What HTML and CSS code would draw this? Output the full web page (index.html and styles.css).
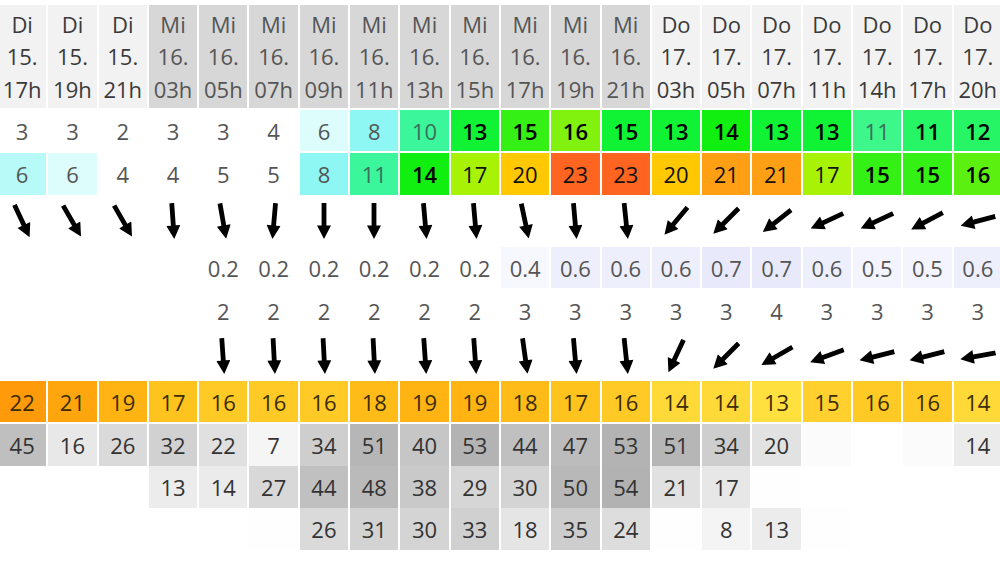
FILE: index.html
```html
<!DOCTYPE html>
<html lang="de">

<head>
  <meta charset="UTF-8">
  <meta name="viewport" content="width=device-width, initial-scale=1.0">
  <title>Vorhersage</title>
  <link rel="stylesheet" href="styles.css">
</head>

<body>
  <svg class="defs" width="0" height="0">
    <symbol id="arrow" viewBox="0 0 14 36">
      <path d="M4.6 0 H9.4 V22.5 H14 L7 36 L0 22.5 H4.6 Z" />
    </symbol>
  </svg>

  <div class="forecast">
    <!-- Zeit -->
    <div class="row head">
      <div class="cell">Di<br>15.<br>17h</div>
      <div class="cell">Di<br>15.<br>19h</div>
      <div class="cell">Di<br>15.<br>21h</div>
      <div class="cell today">Mi<br>16.<br>03h</div>
      <div class="cell today">Mi<br>16.<br>05h</div>
      <div class="cell today">Mi<br>16.<br>07h</div>
      <div class="cell today">Mi<br>16.<br>09h</div>
      <div class="cell today">Mi<br>16.<br>11h</div>
      <div class="cell today">Mi<br>16.<br>13h</div>
      <div class="cell today">Mi<br>16.<br>15h</div>
      <div class="cell today">Mi<br>16.<br>17h</div>
      <div class="cell today">Mi<br>16.<br>19h</div>
      <div class="cell today">Mi<br>16.<br>21h</div>
      <div class="cell">Do<br>17.<br>03h</div>
      <div class="cell">Do<br>17.<br>05h</div>
      <div class="cell">Do<br>17.<br>07h</div>
      <div class="cell">Do<br>17.<br>11h</div>
      <div class="cell">Do<br>17.<br>14h</div>
      <div class="cell">Do<br>17.<br>17h</div>
      <div class="cell">Do<br>17.<br>20h</div>
    </div>

    <!-- Wind -->
    <div class="row">
      <div class="cell">3</div>
      <div class="cell">3</div>
      <div class="cell">2</div>
      <div class="cell">3</div>
      <div class="cell">3</div>
      <div class="cell">4</div>
      <div class="cell cy1">6</div>
      <div class="cell cy3">8</div>
      <div class="cell tq tl">10</div>
      <div class="cell gr2 b">13</div>
      <div class="cell gr4 b">15</div>
      <div class="cell lm2 b">16</div>
      <div class="cell gr2 b">15</div>
      <div class="cell gr2 b">13</div>
      <div class="cell gr3 b">14</div>
      <div class="cell gr2 b">13</div>
      <div class="cell gr2 b">13</div>
      <div class="cell tq2 tl">11</div>
      <div class="cell gr1 b">11</div>
      <div class="cell gr1 b">12</div>
    </div>

    <!-- Boeen -->
    <div class="row">
      <div class="cell cy2">6</div>
      <div class="cell cy1">6</div>
      <div class="cell">4</div>
      <div class="cell">4</div>
      <div class="cell">5</div>
      <div class="cell">5</div>
      <div class="cell cy3">8</div>
      <div class="cell tq tl">11</div>
      <div class="cell gr3 b">14</div>
      <div class="cell yg dk">17</div>
      <div class="cell am dk">20</div>
      <div class="cell rd dk">23</div>
      <div class="cell rd dk">23</div>
      <div class="cell am dk">20</div>
      <div class="cell or dk">21</div>
      <div class="cell or dk">21</div>
      <div class="cell yg dk">17</div>
      <div class="cell gr4 b">15</div>
      <div class="cell gr4 b">15</div>
      <div class="cell lm1 b">16</div>
    </div>

    <!-- Windrichtung -->
    <div class="row arrows">
      <div class="cell"><svg class="arr" style="--d:-25deg"><use href="#arrow" /></svg></div>
      <div class="cell"><svg class="arr" style="--d:-30deg"><use href="#arrow" /></svg></div>
      <div class="cell"><svg class="arr" style="--d:-30deg"><use href="#arrow" /></svg></div>
      <div class="cell"><svg class="arr" style="--d:-4deg"><use href="#arrow" /></svg></div>
      <div class="cell"><svg class="arr" style="--d:-10deg"><use href="#arrow" /></svg></div>
      <div class="cell"><svg class="arr" style="--d:5deg"><use href="#arrow" /></svg></div>
      <div class="cell"><svg class="arr" style="--d:0deg"><use href="#arrow" /></svg></div>
      <div class="cell"><svg class="arr" style="--d:0deg"><use href="#arrow" /></svg></div>
      <div class="cell"><svg class="arr" style="--d:-5deg"><use href="#arrow" /></svg></div>
      <div class="cell"><svg class="arr" style="--d:-5deg"><use href="#arrow" /></svg></div>
      <div class="cell"><svg class="arr" style="--d:-12deg"><use href="#arrow" /></svg></div>
      <div class="cell"><svg class="arr" style="--d:-5deg"><use href="#arrow" /></svg></div>
      <div class="cell"><svg class="arr" style="--d:-6deg"><use href="#arrow" /></svg></div>
      <div class="cell"><svg class="arr" style="--d:40deg"><use href="#arrow" /></svg></div>
      <div class="cell"><svg class="arr" style="--d:45deg"><use href="#arrow" /></svg></div>
      <div class="cell"><svg class="arr" style="--d:52deg"><use href="#arrow" /></svg></div>
      <div class="cell"><svg class="arr" style="--d:65deg"><use href="#arrow" /></svg></div>
      <div class="cell"><svg class="arr" style="--d:65deg"><use href="#arrow" /></svg></div>
      <div class="cell"><svg class="arr" style="--d:62deg"><use href="#arrow" /></svg></div>
      <div class="cell"><svg class="arr" style="--d:75deg"><use href="#arrow" /></svg></div>
    </div>

    <!-- Wellenhoehe -->
    <div class="row">
      <div class="cell"></div>
      <div class="cell"></div>
      <div class="cell"></div>
      <div class="cell"></div>
      <div class="cell">0.2</div>
      <div class="cell">0.2</div>
      <div class="cell">0.2</div>
      <div class="cell">0.2</div>
      <div class="cell">0.2</div>
      <div class="cell">0.2</div>
      <div class="cell wv4">0.4</div>
      <div class="cell wv6">0.6</div>
      <div class="cell wv6">0.6</div>
      <div class="cell wv6">0.6</div>
      <div class="cell wv7">0.7</div>
      <div class="cell wv7">0.7</div>
      <div class="cell wv6">0.6</div>
      <div class="cell wv5">0.5</div>
      <div class="cell wv5">0.5</div>
      <div class="cell wv6">0.6</div>
    </div>

    <!-- Wellenperiode -->
    <div class="row">
      <div class="cell"></div>
      <div class="cell"></div>
      <div class="cell"></div>
      <div class="cell"></div>
      <div class="cell">2</div>
      <div class="cell">2</div>
      <div class="cell">2</div>
      <div class="cell">2</div>
      <div class="cell">2</div>
      <div class="cell">2</div>
      <div class="cell">3</div>
      <div class="cell">3</div>
      <div class="cell">3</div>
      <div class="cell">3</div>
      <div class="cell">3</div>
      <div class="cell">4</div>
      <div class="cell">3</div>
      <div class="cell">3</div>
      <div class="cell">3</div>
      <div class="cell">3</div>
    </div>

    <!-- Wellenrichtung -->
    <div class="row arrows waves">
      <div class="cell"></div>
      <div class="cell"></div>
      <div class="cell"></div>
      <div class="cell"></div>
      <div class="cell"><svg class="arr" style="--d:-4deg"><use href="#arrow" /></svg></div>
      <div class="cell"><svg class="arr" style="--d:-3deg"><use href="#arrow" /></svg></div>
      <div class="cell"><svg class="arr" style="--d:-3deg"><use href="#arrow" /></svg></div>
      <div class="cell"><svg class="arr" style="--d:-3deg"><use href="#arrow" /></svg></div>
      <div class="cell"><svg class="arr" style="--d:-4deg"><use href="#arrow" /></svg></div>
      <div class="cell"><svg class="arr" style="--d:-4deg"><use href="#arrow" /></svg></div>
      <div class="cell"><svg class="arr" style="--d:-8deg"><use href="#arrow" /></svg></div>
      <div class="cell"><svg class="arr" style="--d:-5deg"><use href="#arrow" /></svg></div>
      <div class="cell"><svg class="arr" style="--d:-6deg"><use href="#arrow" /></svg></div>
      <div class="cell"><svg class="arr" style="--d:25deg"><use href="#arrow" /></svg></div>
      <div class="cell"><svg class="arr" style="--d:45deg"><use href="#arrow" /></svg></div>
      <div class="cell"><svg class="arr" style="--d:60deg"><use href="#arrow" /></svg></div>
      <div class="cell"><svg class="arr" style="--d:70deg"><use href="#arrow" /></svg></div>
      <div class="cell"><svg class="arr" style="--d:76deg"><use href="#arrow" /></svg></div>
      <div class="cell"><svg class="arr" style="--d:76deg"><use href="#arrow" /></svg></div>
      <div class="cell"><svg class="arr" style="--d:80deg"><use href="#arrow" /></svg></div>
    </div>

    <!-- Temperatur -->
    <div class="row temp">
      <div class="cell t22">22</div>
      <div class="cell t21">21</div>
      <div class="cell t19">19</div>
      <div class="cell t17">17</div>
      <div class="cell t16">16</div>
      <div class="cell t16">16</div>
      <div class="cell t16">16</div>
      <div class="cell t18">18</div>
      <div class="cell t19">19</div>
      <div class="cell t19">19</div>
      <div class="cell t18">18</div>
      <div class="cell t17">17</div>
      <div class="cell t16">16</div>
      <div class="cell t14">14</div>
      <div class="cell t14">14</div>
      <div class="cell t13">13</div>
      <div class="cell t15">15</div>
      <div class="cell t16">16</div>
      <div class="cell t16">16</div>
      <div class="cell t14">14</div>
    </div>

    <!-- Bewoelkung -->
    <div class="clouds">
      <div class="row">
        <div class="cell cl" style="--v:45">45</div>
        <div class="cell cl" style="--v:16">16</div>
        <div class="cell cl" style="--v:26">26</div>
        <div class="cell cl" style="--v:32">32</div>
        <div class="cell cl" style="--v:22">22</div>
        <div class="cell cl" style="--v:7">7</div>
        <div class="cell cl" style="--v:34">34</div>
        <div class="cell cl" style="--v:51">51</div>
        <div class="cell cl" style="--v:40">40</div>
        <div class="cell cl" style="--v:53">53</div>
        <div class="cell cl" style="--v:44">44</div>
        <div class="cell cl" style="--v:47">47</div>
        <div class="cell cl" style="--v:53">53</div>
        <div class="cell cl" style="--v:51">51</div>
        <div class="cell cl" style="--v:34">34</div>
        <div class="cell cl" style="--v:20">20</div>
        <div class="cell cl" style="--v:3"></div>
        <div class="cell"></div>
        <div class="cell cl" style="--v:3"></div>
        <div class="cell cl" style="--v:14">14</div>
      </div>
      <div class="row">
        <div class="cell"></div>
        <div class="cell"></div>
        <div class="cell"></div>
        <div class="cell cl" style="--v:13">13</div>
        <div class="cell cl" style="--v:14">14</div>
        <div class="cell cl" style="--v:27">27</div>
        <div class="cell cl" style="--v:44">44</div>
        <div class="cell cl" style="--v:48">48</div>
        <div class="cell cl" style="--v:38">38</div>
        <div class="cell cl" style="--v:29">29</div>
        <div class="cell cl" style="--v:30">30</div>
        <div class="cell cl" style="--v:50">50</div>
        <div class="cell cl" style="--v:54">54</div>
        <div class="cell cl" style="--v:21">21</div>
        <div class="cell cl" style="--v:17">17</div>
        <div class="cell cl" style="--v:1"></div>
        <div class="cell"></div>
        <div class="cell"></div>
        <div class="cell"></div>
        <div class="cell"></div>
      </div>
      <div class="row">
        <div class="cell"></div>
        <div class="cell"></div>
        <div class="cell"></div>
        <div class="cell"></div>
        <div class="cell"></div>
        <div class="cell cl" style="--v:1"></div>
        <div class="cell cl" style="--v:26">26</div>
        <div class="cell cl" style="--v:31">31</div>
        <div class="cell cl" style="--v:30">30</div>
        <div class="cell cl" style="--v:33">33</div>
        <div class="cell cl" style="--v:18">18</div>
        <div class="cell cl" style="--v:35">35</div>
        <div class="cell cl" style="--v:24">24</div>
        <div class="cell cl" style="--v:1"></div>
        <div class="cell cl" style="--v:8">8</div>
        <div class="cell cl" style="--v:13">13</div>
        <div class="cell cl" style="--v:1"></div>
        <div class="cell"></div>
        <div class="cell"></div>
        <div class="cell"></div>
      </div>
    </div>
  </div>
</body>

</html>
```

FILE: styles.css
```css
body {
  margin: 0;
  padding: 0;
  background: #fff;
  font-family: "Open Sans", "Liberation Sans", sans-serif;
  font-size: 22px;
  color: #555;
  overflow: hidden;
}

.defs {
  position: absolute;
}

.forecast {
  display: flex;
  flex-direction: column;
  gap: 2px;
  margin-left: -2px;
  padding-top: 5px;
}

.row {
  display: grid;
  grid-template-columns: repeat(20, 48.3px);
  column-gap: 2px;
  height: 41.3px;
}

.cell {
  display: flex;
  align-items: center;
  justify-content: center;
  text-align: center;
  line-height: 1;
}

/* Kopfzeile */
.head {
  height: 103px;
}

.head .cell {
  background: #f2f2f2;
  color: #3a3a3a;
  line-height: 32.5px;
}

.head .cell.today {
  background: #d7d7d7;
  color: #555;
}

/* Pfeile */
.arrows {
  height: 48.4px;
}

.arrows.waves {
  height: 45.4px;
}

.arr {
  width: 14px;
  height: 36px;
  fill: #000;
  transform: rotate(var(--d));
}

/* Textfarben */
.b {
  color: #000;
  font-weight: 600;
}

.dk {
  color: #111;
}

.tl {
  color: #3b6f5c;
}

/* Wind */
.cy1 { background: #dcfdfc; }
.cy2 { background: #b8faf8; }
.cy3 { background: #8ef7f3; }
.tq { background: #3cf69c; }
.tq2 { background: #3ef78a; }
.gr1 { background: #26f566; }
.gr2 { background: #10f335; }
.gr3 { background: #10ef10; }
.gr4 { background: #34f014; }
.lm1 { background: #5cf010; }
.lm2 { background: #80f20e; }
.yg { background: #a8f206; }
.am { background: #ffc800; }
.or { background: #ffa014; }
.rd { background: #ff6420; }

/* Wellen */
.wv4 { background: #f7f7fe; }
.wv5 { background: #f3f4fd; }
.wv6 { background: #eeeffc; }
.wv7 { background: #e8eafb; }

/* Temperatur */
.temp .cell {
  color: #3a2c05;
}

.t22 { background: #ff9a0a; }
.t21 { background: #ffa60e; }
.t19 { background: #ffb414; }
.t18 { background: #ffbc18; }
.t17 { background: #ffc31e; }
.t16 { background: #ffca26; }
.t15 { background: #ffd02e; }
.t14 { background: #ffd937; }
.t13 { background: #ffe03f; }

/* Bewoelkung */
.clouds {
  display: flex;
  flex-direction: column;
}

.clouds .row {
  height: 42px;
}

.cl {
  background: hsl(0, 0%, calc(100% - var(--v) * 0.56%));
  color: #333;
}
```
